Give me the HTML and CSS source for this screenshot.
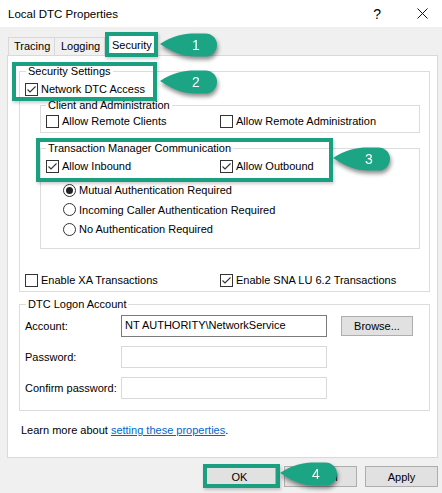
FILE: index.html
```html
<!DOCTYPE html>
<html>
<head>
<meta charset="utf-8">
<title>Local DTC Properties</title>
<link rel="stylesheet" href="styles.css">
</head>
<body>
<div class="window">
  <div class="titlebar">
    <span class="title">Local DTC Properties</span>
    <span class="help">?</span>
    <svg class="close" width="11" height="11" viewBox="0 0 11 11"><path d="M0.5 0.5L10.5 10.5M10.5 0.5L0.5 10.5" stroke="#111" stroke-width="1"/></svg>
  </div>
  <div class="tabs">
    <div class="tab tab-tracing">Tracing</div>
    <div class="tab tab-logging">Logging</div>
    <div class="tab tab-security selected">Security</div>
  </div>
  <div class="panel">
    <fieldset class="group outer security">
      <legend>Security Settings</legend>
      <div class="check"><span class="box"><svg width="11" height="11" viewBox="0 0 11 11"><path d="M1.5 5.5L4 8L9.5 2.5" fill="none" stroke="#333" stroke-width="1.1"/></svg></span>Network DTC Access</div>
      <fieldset class="group inner client">
        <legend>Client and Administration</legend>
        <div class="cols cols-a">
          <div class="check"><span class="box"></span>Allow Remote Clients</div>
          <div class="check"><span class="box"></span>Allow Remote Administration</div>
        </div>
      </fieldset>
      <fieldset class="group inner tmc">
        <legend>Transaction Manager Communication</legend>
        <div class="cols cols-a">
          <div class="check"><span class="box"><svg width="11" height="11" viewBox="0 0 11 11"><path d="M1.5 5.5L4 8L9.5 2.5" fill="none" stroke="#333" stroke-width="1.1"/></svg></span>Allow Inbound</div>
          <div class="check"><span class="box"><svg width="11" height="11" viewBox="0 0 11 11"><path d="M1.5 5.5L4 8L9.5 2.5" fill="none" stroke="#333" stroke-width="1.1"/></svg></span>Allow Outbound</div>
        </div>
        <div class="radios">
          <div class="check"><span class="radio on"></span>Mutual Authentication Required</div>
          <div class="check"><span class="radio"></span>Incoming Caller Authentication Required</div>
          <div class="check"><span class="radio"></span>No Authentication Required</div>
        </div>
      </fieldset>
      <div class="cols cols-b">
        <div class="check"><span class="box"></span>Enable XA Transactions</div>
        <div class="check"><span class="box"><svg width="11" height="11" viewBox="0 0 11 11"><path d="M1.5 5.5L4 8L9.5 2.5" fill="none" stroke="#333" stroke-width="1.1"/></svg></span>Enable SNA LU 6.2 Transactions</div>
      </div>
    </fieldset>
    <fieldset class="group outer logon">
      <legend>DTC Logon Account</legend>
      <div class="form">
        <span class="label">Account:</span>
        <div class="field active">NT AUTHORITY\NetworkService</div>
        <div class="btn browse">Browse...</div>
        <span class="label">Password:</span>
        <div class="field"></div>
        <span></span>
        <span class="label">Confirm password:</span>
        <div class="field"></div>
        <span></span>
      </div>
    </fieldset>
    <p class="learn">Learn more about <a class="link">setting these properties</a>.</p>
  </div>
  <div class="buttons">
    <div class="btn dlg">OK</div>
    <div class="btn dlg">Cancel</div>
    <div class="btn dlg">Apply</div>
  </div>

  <div class="hl hl1"></div>
  <div class="hl hl2"></div>
  <div class="hl hl3"></div>
  <div class="hl hl4"></div>

  <svg class="callout co1" width="58" height="24" viewBox="0 0 58 24"><path d="M0 11C12 3 23 0.5 35 0.5L45.5 0.5A11.5 11.5 0 0 1 45.5 23.5L35 23.5C23 23.5 12 19 0 11Z" fill="#1ba585"/><text x="36" y="17" text-anchor="middle" class="num">1</text></svg>
  <svg class="callout co2" width="58" height="24" viewBox="0 0 58 24"><path d="M0 11C12 3 23 0.5 35 0.5L45.5 0.5A11.5 11.5 0 0 1 45.5 23.5L35 23.5C23 23.5 12 19 0 11Z" fill="#1ba585"/><text x="36" y="17" text-anchor="middle" class="num">2</text></svg>
  <svg class="callout co3" width="58" height="24" viewBox="0 0 58 24"><path d="M0 11C12 3 23 0.5 35 0.5L45.5 0.5A11.5 11.5 0 0 1 45.5 23.5L35 23.5C23 23.5 12 19 0 11Z" fill="#1ba585"/><text x="36" y="17" text-anchor="middle" class="num">3</text></svg>
  <svg class="callout co4" width="58" height="24" viewBox="0 0 58 24"><path d="M0 11C12 3 23 0.5 35 0.5L45.5 0.5A11.5 11.5 0 0 1 45.5 23.5L35 23.5C23 23.5 12 19 0 11Z" fill="#1ba585"/><text x="36" y="17" text-anchor="middle" class="num">4</text></svg>
</div>
</body>
</html>
```

FILE: styles.css
```css
* { box-sizing: border-box; }
html, body { margin: 0; padding: 0; }
body {
  background: #f0f0f0;
  font-family: "Liberation Sans", Arial, sans-serif;
  font-size: 11px;
  color: #000;
  width: 442px;
  height: 493px;
  overflow: hidden;
}
.window { position: relative; width: 442px; height: 493px; }

.titlebar {
  height: 27px;
  background: #fff;
  display: flex;
  align-items: center;
  padding: 0 14px 0 8px;
}
.title { flex: 1; font-size: 11.5px; }
.help { font-size: 14px; margin-right: 36px; }
.close { display: block; }

.tabs {
  height: 28px;
  display: flex;
  align-items: flex-end;
  padding-left: 8px;
}
.tab {
  height: 18px;
  line-height: 17px;
  padding-left: 5px;
  border: 1px solid #d9d9d9;
  border-bottom: none;
  background: #f0f0f0;
  white-space: nowrap;
}
.tab + .tab { border-left: none; }
.tab-tracing { width: 47px; }
.tab-logging { width: 50px; padding-left: 6px; }
.tab-security { width: 53px; }
.tab.selected {
  height: 22px;
  margin-bottom: -1px;
  background: #fff;
  border-left: 1px solid #d9d9d9;
  padding-left: 6px;
  line-height: 20px;
}

.panel {
  width: 431px;
  margin-left: 7px;
  background: #fff;
  border: 1px solid #d9d9d9;
  padding: 0 0 19px 0;
}

.group {
  border: 1px solid #dcdcdc;
  margin: 0;
  padding: 0 5px;
  min-width: 0;
}
.group legend {
  padding: 0 2px;
  line-height: 14px;
  white-space: nowrap;
}
.outer { width: 411px; margin-left: 11px; }
.outer > legend { margin-left: 1px; }
.security { margin-top: 8px; padding-top: 3px; padding-bottom: 3px; }
.inner { width: 380px; margin-left: 15px; }
.client { margin-top: 1px; padding-top: 1px; padding-bottom: 3px; }
.tmc { margin-top: 8px; padding-top: 3px; padding-bottom: 11px; }
.logon { margin-top: 5px; padding-top: 4px; padding-bottom: 11px; }

.check {
  display: flex;
  align-items: center;
  height: 16px;
  gap: 3px;
  white-space: nowrap;
}
.box {
  width: 13px;
  height: 13px;
  flex: none;
  border: 1px solid #333;
  background: #fff;
  display: flex;
}
.radio {
  width: 13px;
  height: 13px;
  flex: none;
  border: 1px solid #333;
  border-radius: 50%;
  background: #fff;
  display: flex;
  align-items: center;
  justify-content: center;
}
.radio.on::after {
  content: "";
  width: 7px;
  height: 7px;
  border-radius: 50%;
  background: #222;
}

.cols { display: grid; }
.cols-a { grid-template-columns: 174px 1fr; }
.cols-b { grid-template-columns: 195px 1fr; margin-top: 23px; }

.radios {
  margin-top: 8px;
  padding-left: 17px;
  display: flex;
  flex-direction: column;
  gap: 3.5px;
}

.form {
  display: grid;
  grid-template-columns: 96px 206px 86px;
  row-gap: 9px;
  align-items: center;
}
.label { white-space: nowrap; }
.field {
  height: 22px;
  border: 1px solid #d9d9d9;
  background: #fff;
  padding: 0 3px;
  line-height: 18px;
  white-space: nowrap;
}
.field.active { border-color: #7a7a7a; }

.btn {
  border: 1px solid #adadad;
  background: #e1e1e1;
  display: flex;
  align-items: center;
  justify-content: center;
  white-space: nowrap;
}
.browse { height: 20px; margin-left: 14px; }

.learn {
  margin: 12px 0 0 0;
  padding-left: 13px;
  line-height: 15px;
}
.link { color: #0066cc; text-decoration: underline; }

.buttons {
  display: flex;
  justify-content: flex-end;
  gap: 8px;
  padding-right: 4px;
  margin-top: 8px;
}
.dlg { width: 73px; height: 21px; }

.hl {
  position: absolute;
  border: 4px solid #1a9f80;
  box-shadow: 1px 2px 3px rgba(0, 0, 0, 0.2);
}
.hl1 { left: 105px; top: 32px; width: 53px; height: 25px; }
.hl2 { left: 12px; top: 62px; width: 145px; height: 39px; }
.hl3 { left: 36px; top: 138px; width: 297px; height: 44px; }
.hl4 { left: 203px; top: 464px; width: 77px; height: 24px; }

.callout {
  position: absolute;
  filter: drop-shadow(1px 3px 2px rgba(0, 0, 0, 0.45));
  overflow: visible;
}
.co1 { left: 160px; top: 33px; }
.co2 { left: 160px; top: 70px; }
.co3 { left: 333px; top: 147px; }
.co4 { left: 280px; top: 462px; }
.num {
  fill: #fff;
  font-family: "Liberation Sans", Arial, sans-serif;
  font-size: 14px;
}
```
